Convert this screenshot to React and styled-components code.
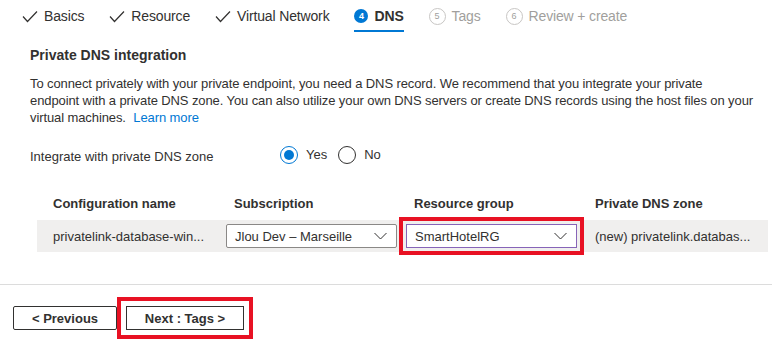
import React from 'react'
import styled, { createGlobalStyle, css } from 'styled-components'

const GlobalStyle = createGlobalStyle`
  body {
    margin: 0;
    background: #fff;
    font-family: "Liberation Sans", Arial, sans-serif;
    color: #323130;
  }
`

const Page = styled.div`
  width: 772px;
  height: 348px;
  overflow: hidden;
  display: flex;
  flex-direction: column;
`

const Tabs = styled.div`
  display: flex;
  align-items: stretch;
  height: 32px;
  padding-left: 22px;
  gap: 25px;
`

const Tab = styled.div`
  display: flex;
  align-items: center;
  gap: 6px;
  font-size: 14px;
  letter-spacing: -0.15px;
  color: ${p => (p.$disabled ? '#a19f9d' : '#323130')};
  font-weight: ${p => (p.$active ? 600 : 400)};
  border-bottom: 2px solid ${p => (p.$active ? '#0078d4' : 'transparent')};
  border-top: 2px solid transparent;
  box-sizing: border-box;
`

const Badge = styled.span`
  display: inline-flex;
  align-items: center;
  justify-content: center;
  border-radius: 50%;
  font-size: 9px;
  font-weight: 700;
  letter-spacing: 0;
  ${p =>
    p.$filled
      ? css`
          width: 14px;
          height: 14px;
          background: #0078d4;
          color: #fff;
        `
      : css`
          width: 15px;
          height: 15px;
          border: 1px solid #c8c6c4;
          color: #a19f9d;
          font-weight: 400;
        `}
`

const Content = styled.div`
  padding: 0 0 0 30px;
`

const Title = styled.div`
  margin-top: 15px;
  font-size: 14px;
  font-weight: 600;
`

const Para = styled.p`
  margin: 12px 0 0;
  font-size: 13px;
  line-height: 17px;
  letter-spacing: -0.1px;
  white-space: nowrap;
`

const Link = styled.a`
  color: #0078d4;
  text-decoration: none;
  margin-left: 4px;
`

const FieldRow = styled.div`
  display: flex;
  align-items: center;
  margin-top: 19px;
  font-size: 13px;
`

const FieldLabel = styled.div`
  width: 250px;
  padding-top: 4px;
`

const RadioGroup = styled.div`
  display: flex;
  align-items: center;
  gap: 11px;
`

const RadioOption = styled.label`
  display: flex;
  align-items: center;
  gap: 8px;
`

const RadioCircle = styled.span`
  width: 18px;
  height: 18px;
  box-sizing: border-box;
  border-radius: 50%;
  border: 1px solid ${p => (p.$checked ? '#0078d4' : '#323130')};
  display: inline-flex;
  align-items: center;
  justify-content: center;
  &::after {
    content: '';
    width: 10px;
    height: 10px;
    border-radius: 50%;
    background: ${p => (p.$checked ? '#0078d4' : 'transparent')};
  }
`

const Table = styled.div`
  margin: 23px 4px 0 37px;
  display: grid;
  grid-template-columns: 189px 180px 181px 1fr;
  font-size: 13px;
`

const HeadCell = styled.div`
  font-weight: 600;
  height: 33px;
  display: flex;
  align-items: center;
  padding-left: ${p => (p.$first ? '16px' : '8px')};
`

const Cell = styled.div`
  background: #f0efee;
  height: 32px;
  display: flex;
  align-items: center;
  padding-left: ${p => p.$pad || '0'};
  white-space: nowrap;
`

const Select = styled.div`
  width: 171px;
  height: 24px;
  box-sizing: border-box;
  background: #fff;
  border: 1px solid ${p => (p.$focus ? '#8764b8' : '#8a8886')};
  border-radius: 2px;
  display: flex;
  align-items: center;
  justify-content: space-between;
  padding: 0 9px 0 8px;
  ${p =>
    p.$highlight &&
    css`
      border-radius: 0;
      outline: 4px solid #e81123;
      outline-offset: 3px;
    `}
`

const Divider = styled.div`
  margin-top: 32px;
  height: 1px;
  background: #dcdcdc;
`

const Footer = styled.div`
  display: flex;
  gap: 9px;
  padding: 21px 0 0 13px;
`

const Button = styled.button`
  height: 24px;
  width: ${p => p.$w}px;
  background: #fff;
  border: 1px solid #323130;
  border-radius: 2px;
  font-family: inherit;
  font-size: 13px;
  font-weight: 600;
  color: #323130;
  ${p =>
    p.$highlight &&
    css`
      border-radius: 0;
      outline: 4px solid #e81123;
      outline-offset: 5px;
    `}
`

const Check = () => (
  <svg width="16" height="13" viewBox="0 0 16 13">
    <polyline points="1,6.5 5.5,11.5 15,1.5" fill="none" stroke="#323130" strokeWidth="1.2" />
  </svg>
)

const Chevron = () => (
  <svg width="13" height="8" viewBox="0 0 13 8">
    <polyline points="0.5,1 6.5,7 12.5,1" fill="none" stroke="#323130" strokeWidth="1" />
  </svg>
)

const App = () => {
  const steps = [
    { label: 'Basics', done: true },
    { label: 'Resource', done: true },
    { label: 'Virtual Network', done: true },
    { label: 'DNS', num: 4, active: true },
    { label: 'Tags', num: 5 },
    { label: 'Review + create', num: 6 },
  ]
  return (
    <Page>
      <GlobalStyle />
      <Tabs>
        {steps.map(s => (
          <Tab key={s.label} $active={s.active} $disabled={!s.done && !s.active}>
            {s.done ? <Check /> : <Badge $filled={s.active}>{s.num}</Badge>}
            {s.label}
          </Tab>
        ))}
      </Tabs>
      <Content>
        <Title>Private DNS integration</Title>
        <Para>
          To connect privately with your private endpoint, you need a DNS record. We recommend that you integrate your private
          <br />
          endpoint with a private DNS zone. You can also utilize your own DNS servers or create DNS records using the host files on your
          <br />
          virtual machines. <Link href="#">Learn more</Link>
        </Para>
        <FieldRow>
          <FieldLabel>Integrate with private DNS zone</FieldLabel>
          <RadioGroup>
            <RadioOption><RadioCircle $checked />Yes</RadioOption>
            <RadioOption><RadioCircle />No</RadioOption>
          </RadioGroup>
        </FieldRow>
      </Content>
      <Table>
        <HeadCell $first>Configuration name</HeadCell>
        <HeadCell>Subscription</HeadCell>
        <HeadCell>Resource group</HeadCell>
        <HeadCell>Private DNS zone</HeadCell>
        <Cell $pad="16px">privatelink-database-win...</Cell>
        <Cell>
          <Select>Jlou Dev – Marseille<Chevron /></Select>
        </Cell>
        <Cell>
          <Select $focus $highlight>SmartHotelRG<Chevron /></Select>
        </Cell>
        <Cell $pad="8px">(new) privatelink.databas...</Cell>
      </Table>
      <Divider />
      <Footer>
        <Button $w={104}>&lt; Previous</Button>
        <Button $w={118} $highlight>Next : Tags &gt;</Button>
      </Footer>
    </Page>
  )
}

export default App
